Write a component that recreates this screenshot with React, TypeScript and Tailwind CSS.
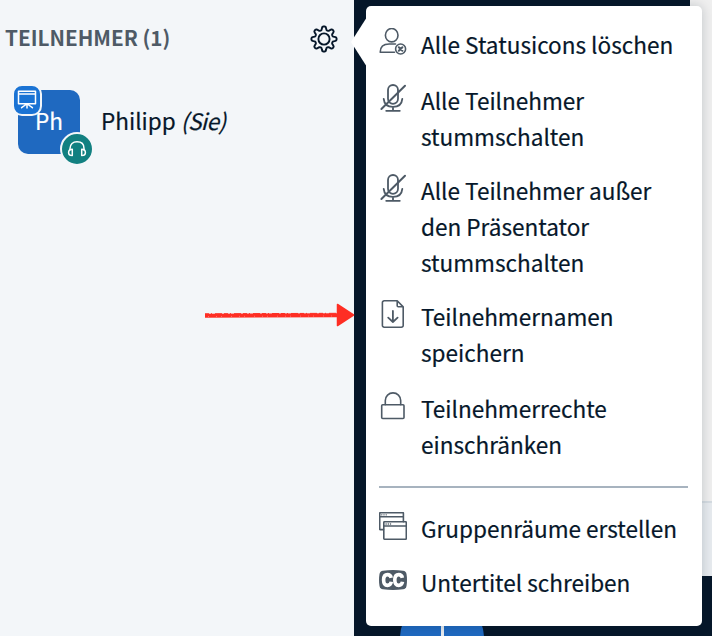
import type { ReactNode } from 'react';

const stroke = {
  fill: 'none',
  stroke: 'currentColor',
  strokeLinecap: 'round' as const,
  strokeLinejoin: 'round' as const,
};

function GearIcon() {
  const points: string[] = [];
  for (let i = 0; i <= 96; i++) {
    const a = (i / 96) * Math.PI * 2;
    const wave = Math.tanh(1.8 * Math.cos(a * 8)) / Math.tanh(1.8);
    const r = 10.8 + 1.8 * wave;
    points.push(`${(14 + r * Math.cos(a)).toFixed(2)},${(14 + r * Math.sin(a)).toFixed(2)}`);
  }
  return (
    <svg width="28" height="28" viewBox="0 0 28 28" {...stroke} strokeWidth="1.9">
      <polygon points={points.join(' ')} />
      <circle cx="14" cy="14" r="5.6" />
    </svg>
  );
}

function UserClearIcon() {
  return (
    <svg width="28" height="28" viewBox="0 0 28 28" {...stroke} strokeWidth="1.6">
      <ellipse cx="12.700" cy="7.200" rx="6.300" ry="6.700" />
      <path d="M15.500 24.200H1.200c0-5.500 3.200-8.200 9-8.200h6.300" />
      <circle cx="21.600" cy="21" r="5" />
      <path d="m19.800 19.200 3.600 3.600m0-3.600-3.600 3.600" strokeWidth="2" />
    </svg>
  );
}

function MutedIcon() {
  return (
    <svg width="28" height="28" viewBox="0 0 28 28" {...stroke} strokeWidth="1.800">
      <rect x="9" y="1" width="10" height="18.800" rx="5" />
      <path d="M4.700 14.800c.5 5.400 4.300 8 9.300 8s8.800-2.600 9.300-8M14 22.800v4M7.200 26.800h13.600" />
      <path d="M2.400 25 26 1.800" strokeWidth="2" />
    </svg>
  );
}

function SaveIcon() {
  return (
    <svg width="28" height="28" viewBox="0 0 28 28" {...stroke} strokeWidth="1.600">
      <path d="M18.200.8H5.200a1.800 1.800 0 0 0-1.800 1.800v22.800a1.800 1.800 0 0 0 1.800 1.800h17.200a1.800 1.800 0 0 0 1.800-1.800V6.900L18.200.8v5a1 1 0 0 0 1 1h5" />
      <path d="M13.900 11v11m-4.700-4.300 4.700 4.300 4.700-4.300" strokeWidth="1.800" />
    </svg>
  );
}

function LockIcon() {
  return (
    <svg width="28" height="28" viewBox="0 0 28 28" {...stroke} strokeWidth="1.600">
      <rect x="2.700" y="12.700" width="22.300" height="13.800" rx="1" />
      <path d="M6.300 12.600V8.600a7.700 7.700 0 0 1 15.400 0v4" />
    </svg>
  );
}

function RoomsIcon() {
  return (
    <svg width="28" height="28" viewBox="0 0 28 28" {...stroke} strokeWidth="1.600">
      <path d="M4.500 17.600H1.300a.6.600 0 0 1-.6-.6V1.200a.6.600 0 0 1 .6-.6h22.500a.6.600 0 0 1 .6.600v8.600M.8 4.800h23.500" />
      <rect x="4.800" y="9.800" width="22.500" height="17.400" rx=".6" />
      <path d="M4.800 14h22.500" />
      <path d="M2.700 2.800h.2m2 0h.2m2 0h.2M7 12h.2m2 0h.2m2 0h.2" strokeWidth="1.300" />
    </svg>
  );
}

function CaptionIcon() {
  return (
    <svg width="28" height="28" viewBox="0 0 28 28">
      <path d="M4 4.700Q14 3.500 24 4.700q3 .4 3.500 3.300 1 6 0 12-.5 2.900-3.500 3.300-10 1.200-20 0-3-.4-3.500-3.300-1-6 0-12Q1 5.100 4 4.700Z" fill="currentColor" />
      <g fill="none" stroke="#fff" strokeWidth="3.600">
        <path d="M12.200 11.800C11.700 9.500 10.300 8.600 8.500 8.600c-2.500 0-3.900 2-3.900 5.400s1.400 5.400 3.900 5.400c2 0 3.400-1.200 3.800-3.600" />
        <path d="M23.400 11.800c-.5-2.300-1.900-3.200-3.700-3.200-2.500 0-3.900 2-3.900 5.400s1.400 5.400 3.900 5.400c2 0 3.400-1.200 3.800-3.600" />
      </g>
    </svg>
  );
}

function PresentationIcon() {
  return (
    <svg width="20" height="20" viewBox="0 0 20 20" {...stroke} strokeWidth="1.500">
      <path d="M1.500 1.200h17v12.500h-17zM1.500 4h17M10 14v4M9 14.500l-4.400 3.200M11 14.500l4.400 3.200" />
    </svg>
  );
}

function HeadphonesIcon() {
  return (
    <svg width="20" height="20" viewBox="0 0 20 20" {...stroke} strokeWidth="1.500">
      <path d="M3 11V9.500C3 5 6 2.800 10 2.800S17 5 17 9.500V11" />
      <path d="M5.300 10.200v6.300C2.800 16.500 1.600 15.400 1.600 13.400s1.200-3.200 3.700-3.200ZM14.700 10.200v6.300c2.500 0 3.700-1.100 3.700-3.100s-1.200-3.200-3.700-3.200Z" />
    </svg>
  );
}

function MenuItem({ icon, lines, className = '' }: { icon: ReactNode; lines: string[]; className?: string }) {
  return (
    <li className={`flex gap-[14px] ${className}`}>
      <span className="mt-[2px] h-7 w-7 shrink-0 text-[#4e5a66]">{icon}</span>
      <span className="flex flex-col whitespace-nowrap">
        {lines.map((line) => (
          <span key={line} className="h-9 leading-9">{line}</span>
        ))}
      </span>
    </li>
  );
}

export default function App() {
  return (
    <div className="relative flex h-[636px] w-[712px] overflow-hidden bg-[#06172a] font-['Noto_Sans_CJK_SC','Noto_Sans',sans-serif] text-[22.560px] text-[#06172a] [-webkit-text-stroke:0.2px]">
      <aside className="h-full w-[354px] bg-[#f3f6f9]">
        <header className="flex h-[78px] items-center justify-between pr-4 pl-[5px]">
          <h2 className="mt-[-2px] text-[20.700px] font-bold whitespace-nowrap text-[#4e5a66] [-webkit-text-stroke:0]">TEILNEHMER (1)</h2>
          <GearIcon />
        </header>
        <div className="flex items-center pt-3 pl-[18px]">
          <div className="relative flex h-16 w-[62px] items-center justify-center rounded-[10px] bg-[#1f69c0] pb-[3px] text-white">
            Ph
            <span className="absolute top-[-6px] left-[-6px] flex h-[32px] w-[30px] items-center justify-center rounded-[10px] border-2 border-[#f3f6f9] bg-[#1a73d4]">
              <PresentationIcon />
            </span>
            <span className="absolute top-[42px] left-[42px] flex h-[34px] w-[34px] items-center justify-center rounded-full border-2 border-[#f3f6f9] bg-[#128081]">
              <HeadphonesIcon />
            </span>
          </div>
          <p className="mt-[-3px] ml-[21px] whitespace-nowrap">Philipp <em className="tracking-[-0.5px]">(Sie)</em></p>
        </div>
      </aside>
      <main className="flex flex-1 flex-col">
        <div className="flex h-[576px]">
          <div className="w-[336px]" />
          <div className="flex flex-1 flex-col">
            <div className="h-[501px] bg-[#efefef]" />
            <div className="h-[2px] bg-[#d5dce2]" />
            <div className="flex-1 bg-[#e7ebef]" />
          </div>
        </div>
        <div className="relative flex-1">
          <div className="absolute top-[20px] left-[46px] flex h-[84px] w-[84px] justify-center rounded-full bg-[#1f69c0]">
            <span className="h-full w-[3px] bg-[#e7ebef]" />
          </div>
        </div>
      </main>

      <svg className="absolute top-[300px] left-[200px] text-[#fe2e24]" width="160" height="30" viewBox="0 0 160 30">
        <path d="M5 15.800 137 15.200" stroke="currentColor" strokeWidth="4" />
        <path d="m5 13.800 132-.5" fill="none" stroke="currentColor" strokeWidth="1" strokeDasharray="4 2 1 3 7 2" />
        <path d="m8 16.500 128-.5" stroke="#fff" strokeWidth=".7" strokeDasharray="1 7 1 4 1 9" opacity=".45" />
        <path d="M137.500 4.500 153.500 15 137.500 25.500Z" fill="currentColor" stroke="currentColor" strokeWidth="1.500" strokeLinejoin="round" />
      </svg>

      <nav className="absolute top-[6px] left-[366px] h-[620px] w-[336px] rounded-[5px] bg-white pl-[13px] shadow-[0_0_12px_rgba(6,23,42,0.2)]">
        <svg className="absolute top-[11px] left-[-15px] text-white" width="16" height="50" viewBox="0 0 16 50">
          <path d="M16 0 0 25l16 25Z" fill="currentColor" />
        </svg>
        <ul className="flex flex-col gap-[18px] pt-[20px]">
          <MenuItem className="pb-[2px]" icon={<UserClearIcon />} lines={['Alle Statusicons löschen']} />
          <MenuItem icon={<MutedIcon />} lines={['Alle Teilnehmer', 'stummschalten']} />
          <MenuItem icon={<MutedIcon />} lines={['Alle Teilnehmer außer', 'den Präsentator', 'stummschalten']} />
          <MenuItem icon={<SaveIcon />} lines={['Teilnehmernamen', 'speichern']} />
          <MenuItem className="pt-[2px]" icon={<LockIcon />} lines={['Teilnehmerrechte', 'einschränken']} />
        </ul>
        <hr className="mt-[24px] mr-[14px] border-t-2 border-[#a7b3bf]" />
        <ul className="flex flex-col gap-[18px] pt-[22px]">
          <MenuItem icon={<RoomsIcon />} lines={['Gruppenräume erstellen']} />
          <MenuItem icon={<CaptionIcon />} lines={['Untertitel schreiben']} />
        </ul>
      </nav>
    </div>
  );
}
